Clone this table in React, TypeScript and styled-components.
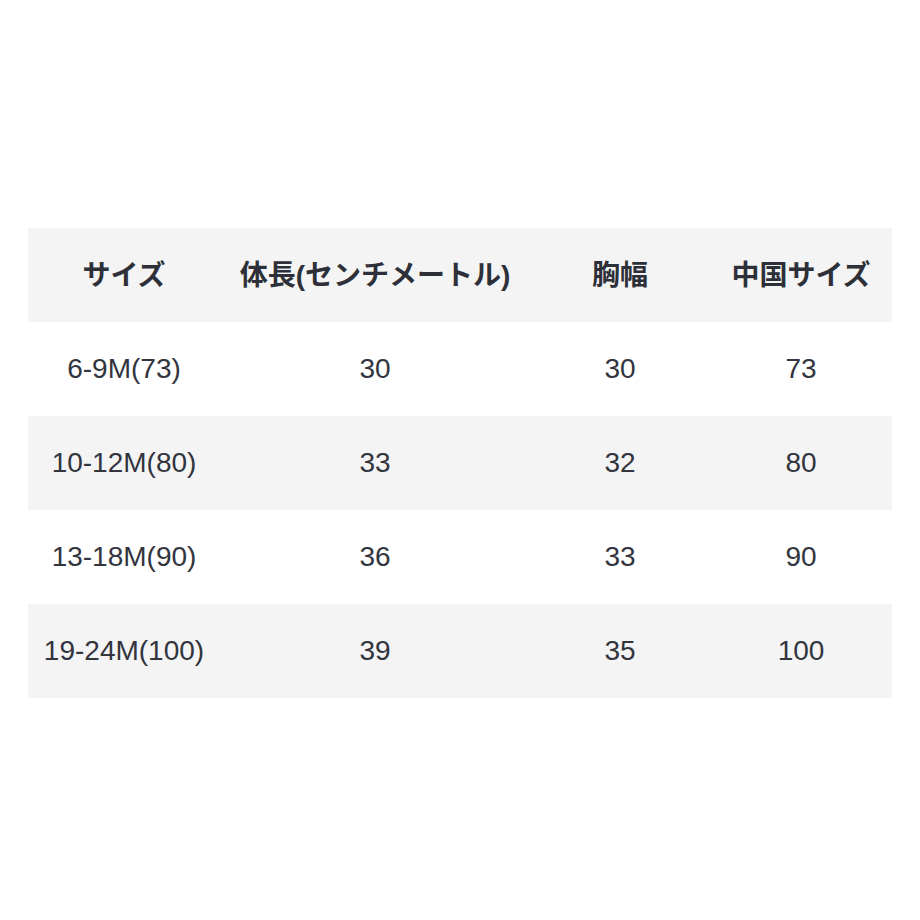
import React from "react"
import styled, { createGlobalStyle } from "styled-components"

interface ISizeRow {
  size: string
  length: string
  chest: string
  cn: string
}

const rows: ISizeRow[] = [
  { size: "6-9M(73)", length: "30", chest: "30", cn: "73" },
  { size: "10-12M(80)", length: "33", chest: "32", cn: "80" },
  { size: "13-18M(90)", length: "36", chest: "33", cn: "90" },
  { size: "19-24M(100)", length: "39", chest: "35", cn: "100" }
]

const columns = ["サイズ", "体長(センチメートル)", "胸幅", "中国サイズ"]
const colWidths = [192, 310, 180, 182]

const GlobalStyle = createGlobalStyle`
  html, body {
    margin: 0;
    padding: 0;
    background: #ffffff;
  }
  body {
    font-family: "Liberation Sans", "Noto Sans CJK JP", sans-serif;
    color: #32353e;
  }
`

const Page = styled.div`
  width: 920px;
  height: 920px;
  display: flex;
  flex-direction: column;
  align-items: center;
  padding-top: 228px;
  box-sizing: border-box;
`

const Table = styled.table`
  width: 864px;
  border-collapse: collapse;
  table-layout: fixed;
  font-size: 28px;
`

const Row = styled.tr<{ $shaded: boolean }>`
  height: 94px;
  background: ${({ $shaded }) => ($shaded ? "#f4f4f5" : "#ffffff")};
`

const HeadCell = styled.th`
  padding: 0 0 4px;
  text-align: center;
  vertical-align: middle;
  font-weight: 700;
  white-space: nowrap;
  color: #2d3038;
`

const Cell = styled.td`
  padding: 0;
  text-align: center;
  vertical-align: middle;
  font-weight: 400;
  white-space: nowrap;
`

const App: React.FC = () => (
  <>
    <GlobalStyle />
    <Page>
      <Table>
        <colgroup>
          {colWidths.map((w, i) => (
            <col key={i} style={{ width: w }} />
          ))}
        </colgroup>
        <thead>
          <Row $shaded>
            {columns.map((c) => (
              <HeadCell key={c}>{c}</HeadCell>
            ))}
          </Row>
        </thead>
        <tbody>
          {rows.map((r, i) => (
            <Row key={r.size} $shaded={i % 2 === 1}>
              <Cell>{r.size}</Cell>
              <Cell>{r.length}</Cell>
              <Cell>{r.chest}</Cell>
              <Cell>{r.cn}</Cell>
            </Row>
          ))}
        </tbody>
      </Table>
    </Page>
  </>
)

export default App
